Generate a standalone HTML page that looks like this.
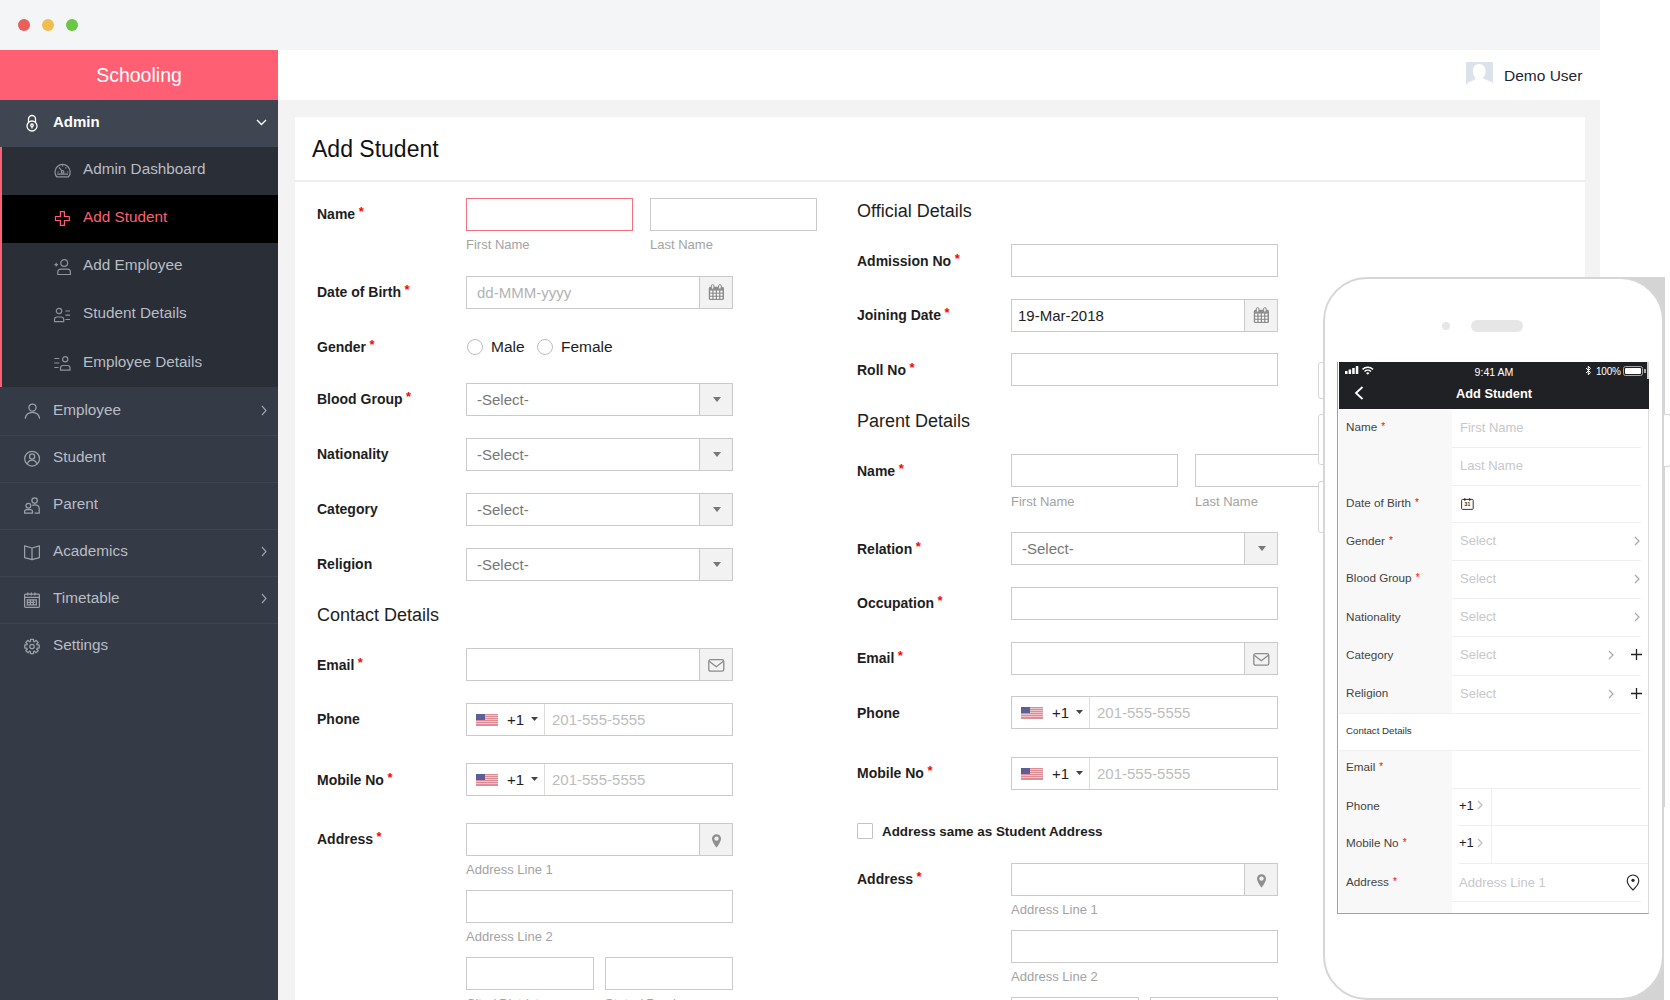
<!DOCTYPE html>
<html><head><meta charset="utf-8"><style>
*{box-sizing:border-box;margin:0;padding:0}
html,body{width:1670px;height:1000px;overflow:hidden;background:#fff;font-family:"Liberation Sans",sans-serif}
.a{position:absolute}
svg{position:absolute;overflow:visible}
.dot{position:absolute;width:12px;height:12px;border-radius:50%;top:19px}
.lbl{position:absolute;font:bold 14px/16px "Liberation Sans",sans-serif;color:#1e1e1e;white-space:nowrap}
.lbl i{font-style:normal;color:#f00;font-size:13px;position:relative;top:-3px;margin-left:3.5px}
.inp{position:absolute;height:33px;border:1px solid #cacaca;background:#fff}
.add{position:absolute;top:0;right:0;width:33px;height:31px;background:#f2f2f2;border-left:1px solid #cacaca}
.hlp{position:absolute;font:13px/15px "Liberation Sans",sans-serif;color:#a3a3a3;white-space:nowrap}
.ph{position:absolute;font:15px/17px "Liberation Sans",sans-serif;color:#777;white-space:nowrap}
.h2{position:absolute;font:18px/20px "Liberation Sans",sans-serif;color:#1e1e1e;white-space:nowrap}
.mi{position:absolute;font:15px/17px "Liberation Sans",sans-serif;color:#b9bdc5;white-space:nowrap}
.sep{position:absolute;left:0;width:278px;height:1px;background:#3d4350}
.pl{position:absolute;font:11.7px/14px "Liberation Sans",sans-serif;color:#444;white-space:nowrap}
.pl i{font-style:normal;color:#f00;margin-left:4px;font-size:10px;position:relative;top:-1px}
.pp{position:absolute;font:13px/15px "Liberation Sans",sans-serif;color:#c6c6cb;white-space:nowrap}
.pline{position:absolute;height:1px;background:#efefef}
</style></head><body>
<div class="a" style="left:0px;top:0px;width:1600px;height:50px;background:#f4f5f7;"></div>
<div class="dot" style="left:18px;background:#ea5f59"></div>
<div class="dot" style="left:42px;background:#f2bd4d"></div>
<div class="dot" style="left:66px;background:#6ac645"></div>
<div class="a" style="left:0px;top:50px;width:278px;height:50px;background:#fe5f73;"></div>
<div class="a" style="left:0;top:50px;width:278px;height:50px;color:#fff;font:19.5px/50px 'Liberation Sans',sans-serif;text-align:center">Schooling</div>
<div class="a" style="left:278px;top:50px;width:1322px;height:50px;background:#fff;"></div>
<svg style="left:1466px;top:62px" width="27" height="24" viewBox="0 0 27 24"><rect width="27" height="24" fill="#dde1ea"/><path d="M13.2 2C17 2 19.600 5 19.600 9C19.600 12 18.500 14.300 16.900 15.800C17.500 17 21 18 24.500 19.500C26 20.200 27 21 27 22V24H0V23C1 21.500 3 20 6 19C8 18.200 9.500 17.500 9.600 15.800C7.900 14.300 6.800 12 6.800 9C6.800 5 9.400 2 13.200 2Z" fill="#fff"/></svg>
<div class="mi" style="left:1504px;top:67px;color:#1f2533;font-size:15.5px;line-height:18px">Demo User</div>
<div class="a" style="left:0px;top:100px;width:278px;height:900px;background:#343a46;"></div>
<div class="a" style="left:278px;top:100px;width:1322px;height:900px;background:#f3f3f3;"></div>
<div class="a" style="left:295px;top:117px;width:1290px;height:883px;background:#fff;"></div>
<div class="a" style="left:295px;top:180px;width:1290px;height:2px;background:#eeeeee;"></div>
<div class="a" style="left:0px;top:100px;width:278px;height:47px;background:#3f4652;"></div>
<div class="a" style="left:53px;top:113px;font:bold 15px/18px 'Liberation Sans',sans-serif;color:#fff">Admin</div>
<svg style="left:25px;top:114px" width="14" height="18" viewBox="0 0 14 18" fill="none" stroke="#fff" stroke-width="1.3"><path d="M3.5 8V5a3.5 3.5 0 0 1 7 0v3"/><circle cx="7" cy="12" r="5"/><circle cx="7" cy="11.3" r="1.3"/><path d="M7 12.6v2"/></svg>
<svg style="left:256px;top:119px" width="11" height="7" viewBox="0 0 11 7" fill="none" stroke="#fff" stroke-width="1.4"><path d="M1 1l4.5 4.5L10 1"/></svg>
<div class="a" style="left:0px;top:147px;width:278px;height:240px;background:#2a2e37;"></div>
<div class="a" style="left:0px;top:195px;width:278px;height:48px;background:#000;"></div>
<div class="a" style="left:0px;top:147px;width:2px;height:240px;background:#fe5f73;"></div>
<svg style="left:54px;top:161px" width="17" height="17" viewBox="0 0 17 17" fill="none" stroke="#8f949c" stroke-width="1.2"><path d="M2.7 15.8A7.6 7.6 0 1 1 14.5 15.8Z"/><path d="M3.2 13.2H14M5.6 7.2l2.4 2.9M8.6 4.2v1.3M3.4 11h1.3M12.9 11h1.3M12.3 6.5l-.9.9M4.9 6.5l.9.9"/><circle cx="8.6" cy="10.9" r="1.3"/></svg>
<div class="mi" style="left:83px;top:160px;color:#b9bdc5;font-size:15.3px">Admin Dashboard</div>
<svg style="left:54px;top:209px" width="17" height="17" viewBox="0 0 17 17" fill="none" stroke="#fe5f73" stroke-width="1.2"><path stroke-linejoin="round" d="M6.4 2.6h4v4.9h4.9v4h-4.9v4.9h-4v-4.9H1.5v-4h4.9z"/></svg>
<div class="mi" style="left:83px;top:208px;color:#fe5f73;font-size:15.3px">Add Student</div>
<svg style="left:54px;top:257px" width="17" height="17" viewBox="0 0 17 17" fill="none" stroke="#8f949c" stroke-width="1.2"><circle cx="10.2" cy="6" r="3.4"/><path d="M3.8 17.5v-2.4c0-1.8 1.3-3 3-3h6.6c1.7 0 3 1.2 3 3v2.4z"/><path d="M0.4 7.6h3.6M2.2 5.8v3.6"/></svg>
<div class="mi" style="left:83px;top:256px;color:#b9bdc5;font-size:15.3px">Add Employee</div>
<svg style="left:54px;top:305px" width="17" height="17" viewBox="0 0 17 17" fill="none" stroke="#8f949c" stroke-width="1.2"><circle cx="5" cy="6" r="2.7"/><path d="M0.5 16.6v-2.1c0-1.5 1-2.5 2.5-2.5h4.2c1.5 0 2.5 1 2.5 2.5v2.1z"/><path d="M11.4 6h4.6M11.4 10.2h4.6M11.4 14.5h4.6"/></svg>
<div class="mi" style="left:83px;top:304px;color:#b9bdc5;font-size:15.3px">Student Details</div>
<svg style="left:54px;top:354px" width="17" height="17" viewBox="0 0 17 17" fill="none" stroke="#8f949c" stroke-width="1.2"><circle cx="11.2" cy="5.2" r="2.6"/><path d="M6.5 16.2v-2.2c0-1.5 1-2.5 2.5-2.5h4.5c1.5 0 2.5 1 2.5 2.5v2.2z"/><path d="M0.3 4.5h5M0.3 9h5M0.3 13.5h4.2"/></svg>
<div class="mi" style="left:83px;top:353px;color:#b9bdc5;font-size:15.3px">Employee Details</div>
<svg style="left:24px;top:402px" width="17" height="17" viewBox="0 0 17 17" fill="none" stroke="#9ca1a9" stroke-width="1.25"><circle cx="8.5" cy="5.6" r="3.6"/><path d="M1.3 16.8C1.3 12.8 4.5 10.3 8.4 10.3S15.5 12.8 15.5 16.8"/></svg>
<div class="mi" style="left:53px;top:401px;font-size:15.3px">Employee</div>
<svg style="left:261px;top:405px" width="6" height="11" viewBox="0 0 6 11" fill="none" stroke="#9ca1a9" stroke-width="1.2"><path d="M1 1l4 4.5L1 10"/></svg>
<div class="sep" style="top:435px"></div>
<svg style="left:24px;top:449px" width="17" height="17" viewBox="0 0 17 17" fill="none" stroke="#9ca1a9" stroke-width="1.25"><circle cx="8.1" cy="9.7" r="7.4"/><circle cx="8.1" cy="7.4" r="2.6"/><path d="M3.1 15.2C4.1 12.6 6 11.2 8.1 11.2S12.1 12.6 13.1 15.2"/></svg>
<div class="mi" style="left:53px;top:448px;font-size:15.3px">Student</div>
<div class="sep" style="top:482px"></div>
<svg style="left:24px;top:496px" width="17" height="17" viewBox="0 0 17 17" fill="none" stroke="#9ca1a9" stroke-width="1.25"><circle cx="10.6" cy="4.6" r="2.7"/><circle cx="4.4" cy="9.7" r="2.4"/><path d="M0.6 17.2v-1.4c0-1.3.8-2.1 2.1-2.1h3.7c1.3 0 2.1.8 2.1 2.1v1.4z"/><path d="M8.2 9.6c.6-.5 1.4-.8 2.4-.8 2.8 0 4.6 1.6 4.6 3.8v4.6h-4.6"/></svg>
<div class="mi" style="left:53px;top:495px;font-size:15.3px">Parent</div>
<div class="sep" style="top:529px"></div>
<svg style="left:24px;top:543px" width="17" height="17" viewBox="0 0 17 17" fill="none" stroke="#9ca1a9" stroke-width="1.25"><path stroke-linejoin="round" d="M0.6 2.9L8 5L15.4 2.9V14.6L8 16.7L0.6 14.6Z M8 5V16.7"/></svg>
<div class="mi" style="left:53px;top:542px;font-size:15.3px">Academics</div>
<svg style="left:261px;top:546px" width="6" height="11" viewBox="0 0 6 11" fill="none" stroke="#9ca1a9" stroke-width="1.2"><path d="M1 1l4 4.5L1 10"/></svg>
<div class="sep" style="top:576px"></div>
<svg style="left:24px;top:590px" width="17" height="17" viewBox="0 0 17 17" fill="none" stroke="#9ca1a9" stroke-width="1.25"><rect x="0.6" y="4" width="14.8" height="13.3" rx="1"/><path d="M0.6 7.3h14.8M3.8 2.4v3M7.3 2.4v3M10.9 2.4v3M3.3 9.8h9v5h-9zM3.3 12.3h7.5M6.3 9.8v5M9.3 9.8v5"/></svg>
<div class="mi" style="left:53px;top:589px;font-size:15.3px">Timetable</div>
<svg style="left:261px;top:593px" width="6" height="11" viewBox="0 0 6 11" fill="none" stroke="#9ca1a9" stroke-width="1.2"><path d="M1 1l4 4.5L1 10"/></svg>
<div class="sep" style="top:623px"></div>
<svg style="left:24px;top:638px" width="17" height="17" viewBox="0 0 17 17" fill="none" stroke="#9ca1a9" stroke-width="1.25"><path stroke-linejoin="round" d="M12.90 6.47 L13.07 6.95 L15.24 6.96 L15.24 10.04 L13.07 10.05 L12.90 10.53 L12.68 10.99 L14.21 12.53 L12.03 14.71 L10.49 13.18 L10.03 13.40 L9.55 13.57 L9.54 15.74 L6.46 15.74 L6.45 13.57 L5.97 13.40 L5.51 13.18 L3.97 14.71 L1.79 12.53 L3.32 10.99 L3.10 10.53 L2.93 10.05 L0.76 10.04 L0.76 6.96 L2.93 6.95 L3.10 6.47 L3.32 6.01 L1.79 4.47 L3.97 2.29 L5.51 3.82 L5.97 3.60 L6.45 3.43 L6.46 1.26 L9.54 1.26 L9.55 3.43 L10.03 3.60 L10.49 3.82 L12.03 2.29 L14.21 4.47 L12.68 6.01Z"/><circle cx="8" cy="8.5" r="2.2"/></svg>
<div class="mi" style="left:53px;top:636px;font-size:15.3px">Settings</div>
<div class="a" style="left:312px;top:136px;font:23px/26px 'Liberation Sans',sans-serif;color:#111;white-space:nowrap">Add Student</div>
<div class="lbl" style="left:317px;top:206px">Name<i>*</i></div>
<div class="inp" style="left:466px;top:198px;width:167px;height:33px;border-color:#f2727f"></div>
<div class="inp" style="left:650px;top:198px;width:167px;height:33px;border-color:#cacaca"></div>
<div class="hlp" style="left:466px;top:237px;">First Name</div>
<div class="hlp" style="left:650px;top:237px;">Last Name</div>
<div class="lbl" style="left:317px;top:284px">Date of Birth<i>*</i></div>
<div class="inp" style="left:466px;top:276px;width:267px">
<div class="ph" style="left:10px;top:7px;color:#b3b3b3">dd-MMM-yyyy</div>
<div class="add"><svg style="left:8px;top:7px" width="17" height="17" viewBox="0 0 17 17"><rect x="0.8" y="2.8" width="15.2" height="13.2" rx="1.6" fill="#8c8c8c"/><rect x="2.2" y="6.6" width="2.1" height="2" fill="#fff"/><rect x="2.2" y="9.7" width="2.1" height="2" fill="#fff"/><rect x="2.2" y="12.8" width="2.1" height="2" fill="#fff"/><rect x="5.6" y="6.6" width="2.1" height="2" fill="#fff"/><rect x="5.6" y="9.7" width="2.1" height="2" fill="#fff"/><rect x="5.6" y="12.8" width="2.1" height="2" fill="#fff"/><rect x="9.0" y="6.6" width="2.1" height="2" fill="#fff"/><rect x="9.0" y="9.7" width="2.1" height="2" fill="#fff"/><rect x="9.0" y="12.8" width="2.1" height="2" fill="#fff"/><rect x="12.4" y="6.6" width="2.1" height="2" fill="#fff"/><rect x="12.4" y="9.7" width="2.1" height="2" fill="#fff"/><rect x="12.4" y="12.8" width="2.1" height="2" fill="#fff"/><rect x="3.3" y="0.6" width="2.6" height="4.6" rx="1.3" fill="#f2f2f2" stroke="#8c8c8c" stroke-width="1"/><rect x="10.6" y="0.6" width="2.6" height="4.6" rx="1.3" fill="#f2f2f2" stroke="#8c8c8c" stroke-width="1"/></svg></div></div>
<div class="lbl" style="left:317px;top:339px">Gender<i>*</i></div>
<div class="a" style="left:467px;top:339px;width:16px;height:16px;border:1px solid #bdbdbd;border-radius:50%"></div>
<div class="ph" style="left:491px;top:338px;color:#1e1e1e;font-size:15.5px">Male</div>
<div class="a" style="left:537px;top:339px;width:16px;height:16px;border:1px solid #bdbdbd;border-radius:50%"></div>
<div class="ph" style="left:561px;top:338px;color:#1e1e1e;font-size:15.5px">Female</div>
<div class="lbl" style="left:317px;top:391px">Blood Group<i>*</i></div>
<div class="inp" style="left:466px;top:383px;width:267px">
<div class="ph" style="left:10px;top:7px;color:#777">-Select-</div>
<div class="add"><svg style="left:13px;top:13px" width="8" height="5" viewBox="0 0 8 5"><path d="M0 0h8L4 5z" fill="#777"/></svg></div></div>
<div class="lbl" style="left:317px;top:446px">Nationality</div>
<div class="inp" style="left:466px;top:438px;width:267px">
<div class="ph" style="left:10px;top:7px;color:#777">-Select-</div>
<div class="add"><svg style="left:13px;top:13px" width="8" height="5" viewBox="0 0 8 5"><path d="M0 0h8L4 5z" fill="#777"/></svg></div></div>
<div class="lbl" style="left:317px;top:501px">Category</div>
<div class="inp" style="left:466px;top:493px;width:267px">
<div class="ph" style="left:10px;top:7px;color:#777">-Select-</div>
<div class="add"><svg style="left:13px;top:13px" width="8" height="5" viewBox="0 0 8 5"><path d="M0 0h8L4 5z" fill="#777"/></svg></div></div>
<div class="lbl" style="left:317px;top:556px">Religion</div>
<div class="inp" style="left:466px;top:548px;width:267px">
<div class="ph" style="left:10px;top:7px;color:#777">-Select-</div>
<div class="add"><svg style="left:13px;top:13px" width="8" height="5" viewBox="0 0 8 5"><path d="M0 0h8L4 5z" fill="#777"/></svg></div></div>
<div class="h2" style="left:317px;top:605px;">Contact Details</div>
<div class="lbl" style="left:317px;top:657px">Email<i>*</i></div>
<div class="inp" style="left:466px;top:648px;width:267px">
<div class="add"><svg style="left:8px;top:10px" width="17" height="14" viewBox="0 0 17 14" fill="none" stroke="#8c8c8c" stroke-width="1.3" stroke-linejoin="round"><rect x="0.8" y="0.6" width="15" height="11.6" rx="1.8"/><path d="M1.2 2.2l7.1 5.6 7.1-5.6"/></svg></div></div>
<div class="lbl" style="left:317px;top:711px">Phone</div>
<div class="inp" style="left:466px;top:703px;width:267px">
<svg style="left:9px;top:10px" width="22" height="12" viewBox="0 0 22 12" shape-rendering="crispEdges"><rect width="22" height="12" fill="#de8d97"/><rect y="1" width="22" height="1" fill="#ecc3c8"/><rect y="3" width="22" height="1" fill="#ecc3c8"/><rect y="5" width="22" height="1" fill="#ecc3c8"/><rect y="7" width="22" height="1" fill="#ecc3c8"/><rect y="9" width="22" height="1" fill="#ecc3c8"/><rect width="9" height="6" fill="#5b5f96"/></svg>
<div class="ph" style="left:40px;top:7px;color:#222">+1</div>
<svg style="left:64px;top:13px" width="7" height="4" viewBox="0 0 7 4"><path d="M0 0h7L3.5 4z" fill="#444"/></svg>
<div class="a" style="left:77px;top:0;width:1px;height:31px;background:#dcdcdc"></div>
<div class="ph" style="left:85px;top:7px;color:#bdbdbd">201-555-5555</div>
</div>
<div class="lbl" style="left:317px;top:772px">Mobile No<i>*</i></div>
<div class="inp" style="left:466px;top:763px;width:267px">
<svg style="left:9px;top:10px" width="22" height="12" viewBox="0 0 22 12" shape-rendering="crispEdges"><rect width="22" height="12" fill="#de8d97"/><rect y="1" width="22" height="1" fill="#ecc3c8"/><rect y="3" width="22" height="1" fill="#ecc3c8"/><rect y="5" width="22" height="1" fill="#ecc3c8"/><rect y="7" width="22" height="1" fill="#ecc3c8"/><rect y="9" width="22" height="1" fill="#ecc3c8"/><rect width="9" height="6" fill="#5b5f96"/></svg>
<div class="ph" style="left:40px;top:7px;color:#222">+1</div>
<svg style="left:64px;top:13px" width="7" height="4" viewBox="0 0 7 4"><path d="M0 0h7L3.5 4z" fill="#444"/></svg>
<div class="a" style="left:77px;top:0;width:1px;height:31px;background:#dcdcdc"></div>
<div class="ph" style="left:85px;top:7px;color:#bdbdbd">201-555-5555</div>
</div>
<div class="lbl" style="left:317px;top:831px">Address<i>*</i></div>
<div class="inp" style="left:466px;top:823px;width:267px">
<div class="add"><svg style="left:11px;top:10px" width="11" height="14" viewBox="0 0 11 14"><path d="M5.5 0.3C8.200 .3 10 2.300 10 4.700 10 6.800 7.300 11.500 5.500 13.600 3.700 11.500 1 6.800 1 4.700 1 2.300 2.800 .3 5.500 .3z" fill="#8f8f8f"/><circle cx="5.5" cy="4.6" r="2.2" fill="#f2f2f2"/></svg></div></div>
<div class="hlp" style="left:466px;top:862px;">Address Line 1</div>
<div class="inp" style="left:466px;top:890px;width:267px;height:33px;border-color:#cacaca"></div>
<div class="hlp" style="left:466px;top:929px;">Address Line 2</div>
<div class="inp" style="left:466px;top:957px;width:128px;height:33px;border-color:#cacaca"></div>
<div class="inp" style="left:605px;top:957px;width:128px;height:33px;border-color:#cacaca"></div>
<div class="hlp" style="left:466px;top:996px;">City / District</div>
<div class="hlp" style="left:605px;top:996px;">State / Province</div>
<div class="h2" style="left:857px;top:201px;">Official Details</div>
<div class="lbl" style="left:857px;top:253px">Admission No<i>*</i></div>
<div class="inp" style="left:1011px;top:244px;width:267px;height:33px;border-color:#cacaca"></div>
<div class="lbl" style="left:857px;top:307px">Joining Date<i>*</i></div>
<div class="inp" style="left:1011px;top:299px;width:267px">
<div class="ph" style="left:6px;top:7px;color:#222">19-Mar-2018</div>
<div class="add"><svg style="left:8px;top:7px" width="17" height="17" viewBox="0 0 17 17"><rect x="0.8" y="2.8" width="15.2" height="13.2" rx="1.6" fill="#8c8c8c"/><rect x="2.2" y="6.6" width="2.1" height="2" fill="#fff"/><rect x="2.2" y="9.7" width="2.1" height="2" fill="#fff"/><rect x="2.2" y="12.8" width="2.1" height="2" fill="#fff"/><rect x="5.6" y="6.6" width="2.1" height="2" fill="#fff"/><rect x="5.6" y="9.7" width="2.1" height="2" fill="#fff"/><rect x="5.6" y="12.8" width="2.1" height="2" fill="#fff"/><rect x="9.0" y="6.6" width="2.1" height="2" fill="#fff"/><rect x="9.0" y="9.7" width="2.1" height="2" fill="#fff"/><rect x="9.0" y="12.8" width="2.1" height="2" fill="#fff"/><rect x="12.4" y="6.6" width="2.1" height="2" fill="#fff"/><rect x="12.4" y="9.7" width="2.1" height="2" fill="#fff"/><rect x="12.4" y="12.8" width="2.1" height="2" fill="#fff"/><rect x="3.3" y="0.6" width="2.6" height="4.6" rx="1.3" fill="#f2f2f2" stroke="#8c8c8c" stroke-width="1"/><rect x="10.6" y="0.6" width="2.6" height="4.6" rx="1.3" fill="#f2f2f2" stroke="#8c8c8c" stroke-width="1"/></svg></div></div>
<div class="lbl" style="left:857px;top:362px">Roll No<i>*</i></div>
<div class="inp" style="left:1011px;top:353px;width:267px;height:33px;border-color:#cacaca"></div>
<div class="h2" style="left:857px;top:411px;">Parent Details</div>
<div class="lbl" style="left:857px;top:463px">Name<i>*</i></div>
<div class="inp" style="left:1011px;top:454px;width:167px;height:33px;border-color:#cacaca"></div>
<div class="inp" style="left:1195px;top:454px;width:167px;height:33px;border-color:#cacaca"></div>
<div class="hlp" style="left:1011px;top:494px;">First Name</div>
<div class="hlp" style="left:1195px;top:494px;">Last Name</div>
<div class="lbl" style="left:857px;top:541px">Relation<i>*</i></div>
<div class="inp" style="left:1011px;top:532px;width:267px">
<div class="ph" style="left:10px;top:7px;color:#777">-Select-</div>
<div class="add"><svg style="left:13px;top:13px" width="8" height="5" viewBox="0 0 8 5"><path d="M0 0h8L4 5z" fill="#777"/></svg></div></div>
<div class="lbl" style="left:857px;top:595px">Occupation<i>*</i></div>
<div class="inp" style="left:1011px;top:587px;width:267px;height:33px;border-color:#cacaca"></div>
<div class="lbl" style="left:857px;top:650px">Email<i>*</i></div>
<div class="inp" style="left:1011px;top:642px;width:267px">
<div class="add"><svg style="left:8px;top:10px" width="17" height="14" viewBox="0 0 17 14" fill="none" stroke="#8c8c8c" stroke-width="1.3" stroke-linejoin="round"><rect x="0.8" y="0.6" width="15" height="11.6" rx="1.8"/><path d="M1.2 2.2l7.1 5.6 7.1-5.6"/></svg></div></div>
<div class="lbl" style="left:857px;top:705px">Phone</div>
<div class="inp" style="left:1011px;top:696px;width:267px">
<svg style="left:9px;top:10px" width="22" height="12" viewBox="0 0 22 12" shape-rendering="crispEdges"><rect width="22" height="12" fill="#de8d97"/><rect y="1" width="22" height="1" fill="#ecc3c8"/><rect y="3" width="22" height="1" fill="#ecc3c8"/><rect y="5" width="22" height="1" fill="#ecc3c8"/><rect y="7" width="22" height="1" fill="#ecc3c8"/><rect y="9" width="22" height="1" fill="#ecc3c8"/><rect width="9" height="6" fill="#5b5f96"/></svg>
<div class="ph" style="left:40px;top:7px;color:#222">+1</div>
<svg style="left:64px;top:13px" width="7" height="4" viewBox="0 0 7 4"><path d="M0 0h7L3.5 4z" fill="#444"/></svg>
<div class="a" style="left:77px;top:0;width:1px;height:31px;background:#dcdcdc"></div>
<div class="ph" style="left:85px;top:7px;color:#bdbdbd">201-555-5555</div>
</div>
<div class="lbl" style="left:857px;top:765px">Mobile No<i>*</i></div>
<div class="inp" style="left:1011px;top:757px;width:267px">
<svg style="left:9px;top:10px" width="22" height="12" viewBox="0 0 22 12" shape-rendering="crispEdges"><rect width="22" height="12" fill="#de8d97"/><rect y="1" width="22" height="1" fill="#ecc3c8"/><rect y="3" width="22" height="1" fill="#ecc3c8"/><rect y="5" width="22" height="1" fill="#ecc3c8"/><rect y="7" width="22" height="1" fill="#ecc3c8"/><rect y="9" width="22" height="1" fill="#ecc3c8"/><rect width="9" height="6" fill="#5b5f96"/></svg>
<div class="ph" style="left:40px;top:7px;color:#222">+1</div>
<svg style="left:64px;top:13px" width="7" height="4" viewBox="0 0 7 4"><path d="M0 0h7L3.5 4z" fill="#444"/></svg>
<div class="a" style="left:77px;top:0;width:1px;height:31px;background:#dcdcdc"></div>
<div class="ph" style="left:85px;top:7px;color:#bdbdbd">201-555-5555</div>
</div>
<div class="a" style="left:857px;top:823px;width:16px;height:16px;border:1px solid #c4c4c4;border-radius:1px"></div>
<div class="lbl" style="left:882px;top:824px;font-size:13.4px">Address same as Student Address</div>
<div class="lbl" style="left:857px;top:871px">Address<i>*</i></div>
<div class="inp" style="left:1011px;top:863px;width:267px">
<div class="add"><svg style="left:11px;top:10px" width="11" height="14" viewBox="0 0 11 14"><path d="M5.5 0.3C8.200 .3 10 2.300 10 4.700 10 6.800 7.300 11.500 5.500 13.600 3.700 11.500 1 6.800 1 4.700 1 2.300 2.800 .3 5.500 .3z" fill="#8f8f8f"/><circle cx="5.5" cy="4.6" r="2.2" fill="#f2f2f2"/></svg></div></div>
<div class="hlp" style="left:1011px;top:902px;">Address Line 1</div>
<div class="inp" style="left:1011px;top:930px;width:267px;height:33px;border-color:#cacaca"></div>
<div class="hlp" style="left:1011px;top:969px;">Address Line 2</div>
<div class="inp" style="left:1011px;top:997px;width:128px;height:33px;border-color:#cacaca"></div>
<div class="inp" style="left:1150px;top:997px;width:128px;height:33px;border-color:#cacaca"></div>
<div class="a" style="left:1598px;top:277px;width:67px;height:530px;background:#d4d4d4;"></div>
<div class="a" style="left:1598px;top:807px;width:66px;height:193px;background:#d4d4d4;"></div>
<div class="a" style="left:1318px;top:362px;width:8px;height:37px;border:1.5px solid #d6d6d6;border-radius:3px;background:#fff"></div>
<div class="a" style="left:1318px;top:414px;width:8px;height:51px;border:1.5px solid #d6d6d6;border-radius:3px;background:#fff"></div>
<div class="a" style="left:1318px;top:481px;width:8px;height:52px;border:1.5px solid #d6d6d6;border-radius:3px;background:#fff"></div>
<div class="a" style="left:1662px;top:414px;width:9px;height:53px;border:1.5px solid #d6d6d6;border-radius:3px;background:#fff"></div>
<div class="a" style="left:1323px;top:277px;width:341px;height:723px;background:#fff;border:2px solid #d6d6d6;border-radius:44px"></div>
<div class="a" style="left:1442px;top:322px;width:8px;height:8px;border-radius:50%;background:#e6e6e6"></div>
<div class="a" style="left:1471px;top:320px;width:52px;height:12px;border-radius:6px;background:#e6e6e6"></div>
<div class="a" style="left:1337px;top:362px;width:312px;height:552px;background:#fff;border:1px solid #a0a0a0;border-right-color:#dcdcdc;border-top:none"></div>
<div class="a" style="left:1339px;top:362px;width:310px;height:47px;background:#202125;"></div>
<div class="a" style="left:1339px;top:410px;width:113px;height:303px;background:#f8f8f8;"></div>
<div class="a" style="left:1339px;top:750px;width:113px;height:151px;background:#f8f8f8;"></div>
<div class="a" style="left:1339px;top:901px;width:113px;height:12px;background:#f8f8f8;"></div>
<svg style="left:1345px;top:366px" width="30" height="9" viewBox="0 0 30 9" fill="#fff"><rect x="0" y="5" width="2.5" height="3"/><rect x="3.6" y="3.5" width="2.5" height="4.5"/><rect x="7.2" y="2" width="2.5" height="6"/><rect x="10.8" y="0" width="2.5" height="8"/><path d="M17 2.8a8.5 8.5 0 0 1 11.5 0l-1 1.1a7 7 0 0 0-9.5 0z M19 4.9a5.5 5.5 0 0 1 7.5 0l-1 1.1a4 4 0 0 0-5.5 0z M21 7a2.6 2.6 0 0 1 3.5 0l-1.75 1.8z"/></svg>
<div class="a" style="left:1339px;top:365px;width:310px;text-align:center;font:10.6px/14px 'Liberation Sans',sans-serif;color:#fff">9:41 AM</div>
<svg style="left:1585px;top:365px" width="7" height="11" viewBox="0 0 7 11" fill="none" stroke="#fff" stroke-width="1"><path d="M1 3l4.5 4.5L3.3 9.8V1.2L5.5 3.5 1 8"/></svg>
<div class="a" style="left:1596px;top:366px;font:10px/12px 'Liberation Sans',sans-serif;color:#fff;letter-spacing:-0.2px">100%</div>
<div class="a" style="left:1623px;top:366px;width:20px;height:10px;border:1px solid #aaa;border-radius:2.5px;padding:1px"><div style="width:100%;height:100%;background:#fff;border-radius:1px"></div></div>
<div class="a" style="left:1644px;top:369px;width:1.5px;height:4px;background:#aaa"></div>
<div class="a" style="left:1647px;top:362px;width:2px;height:17px;background:#cfcfcf"></div>
<svg style="left:1354px;top:386px" width="10" height="14" viewBox="0 0 10 14" fill="none" stroke="#fff" stroke-width="1.8"><path d="M8.5 1L2 7l6.5 6"/></svg>
<div class="a" style="left:1339px;top:386px;width:310px;text-align:center;font:bold 12.8px/15px 'Liberation Sans',sans-serif;color:#fff">Add Student</div>
<div class="pl" style="left:1346px;top:420px">Name<i>*</i></div>
<div class="pp" style="left:1460px;top:420px;color:#c7c7cc">First Name</div>
<div class="pline" style="left:1452px;top:447px;width:189px"></div>
<div class="pp" style="left:1460px;top:458px;color:#c7c7cc">Last Name</div>
<div class="pline" style="left:1452px;top:485px;width:189px"></div>
<div class="pl" style="left:1346px;top:496px">Date of Birth<i>*</i></div>
<svg style="left:1461px;top:498px" width="13" height="13" viewBox="0 0 13 13"><rect x="0.6" y="1.4" width="11.6" height="10" rx="1" fill="none" stroke="#333" stroke-width="1"/><rect x="3" y="0.3" width="1.6" height="2.4" rx=".8" fill="#222"/><rect x="7.8" y="0.3" width="1.6" height="2.4" rx=".8" fill="#222"/><text x="6.4" y="8.3" font-size="5" font-weight="bold" text-anchor="middle" font-family="Liberation Sans" fill="#222">31</text></svg>
<div class="pline" style="left:1452px;top:522px;width:189px"></div>
<div class="pl" style="left:1346px;top:534px">Gender<i>*</i></div>
<div class="pp" style="left:1460px;top:533px;color:#c7c7cc">Select</div>
<svg style="left:1634px;top:536px" width="6" height="10" viewBox="0 0 6 10" fill="none" stroke="#a8a8ad" stroke-width="1.2"><path d="M1 1l4 4-4 4"/></svg>
<div class="pline" style="left:1452px;top:560px;width:189px"></div>
<div class="pl" style="left:1346px;top:571px">Blood Group<i>*</i></div>
<div class="pp" style="left:1460px;top:571px;color:#c7c7cc">Select</div>
<svg style="left:1634px;top:574px" width="6" height="10" viewBox="0 0 6 10" fill="none" stroke="#a8a8ad" stroke-width="1.2"><path d="M1 1l4 4-4 4"/></svg>
<div class="pline" style="left:1452px;top:598px;width:189px"></div>
<div class="pl" style="left:1346px;top:610px">Nationality</div>
<div class="pp" style="left:1460px;top:609px;color:#c7c7cc">Select</div>
<svg style="left:1634px;top:612px" width="6" height="10" viewBox="0 0 6 10" fill="none" stroke="#a8a8ad" stroke-width="1.2"><path d="M1 1l4 4-4 4"/></svg>
<div class="pline" style="left:1452px;top:636px;width:189px"></div>
<div class="pl" style="left:1346px;top:648px">Category</div>
<div class="pp" style="left:1460px;top:647px;color:#c7c7cc">Select</div>
<svg style="left:1608px;top:650px" width="6" height="10" viewBox="0 0 6 10" fill="none" stroke="#a8a8ad" stroke-width="1.2"><path d="M1 1l4 4-4 4"/></svg>
<svg style="left:1631px;top:649px" width="11" height="11" viewBox="0 0 11 11" fill="none" stroke="#222" stroke-width="1.3"><path d="M5.5 0v11M0 5.5h11"/></svg>
<div class="pline" style="left:1452px;top:675px;width:189px"></div>
<div class="pl" style="left:1346px;top:686px">Religion</div>
<div class="pp" style="left:1460px;top:686px;color:#c7c7cc">Select</div>
<svg style="left:1608px;top:689px" width="6" height="10" viewBox="0 0 6 10" fill="none" stroke="#a8a8ad" stroke-width="1.2"><path d="M1 1l4 4-4 4"/></svg>
<svg style="left:1631px;top:688px" width="11" height="11" viewBox="0 0 11 11" fill="none" stroke="#222" stroke-width="1.3"><path d="M5.5 0v11M0 5.5h11"/></svg>
<div class="pline" style="left:1339px;top:713px;width:302px"></div>
<div class="a" style="left:1346px;top:725px;font:9.7px/11px 'Liberation Sans',sans-serif;color:#333">Contact Details</div>
<div class="pline" style="left:1339px;top:750px;width:302px"></div>
<div class="pl" style="left:1346px;top:760px">Email<i>*</i></div>
<div class="pline" style="left:1452px;top:788px;width:189px"></div>
<div class="pl" style="left:1346px;top:799px">Phone</div>
<div class="pp" style="left:1459px;top:798px;color:#222">+1</div>
<svg style="left:1477px;top:800px" width="6" height="10" viewBox="0 0 6 10" fill="none" stroke="#bbb" stroke-width="1.2"><path d="M1 1l4 4-4 4"/></svg>
<div class="pline" style="left:1459px;top:825px;width:189px"></div>
<div class="a" style="left:1491px;top:788px;width:1px;height:75px;background:#f0f0f0;"></div>
<div class="pl" style="left:1346px;top:836px">Mobile No<i>*</i></div>
<div class="pp" style="left:1459px;top:835px;color:#222">+1</div>
<svg style="left:1477px;top:838px" width="6" height="10" viewBox="0 0 6 10" fill="none" stroke="#bbb" stroke-width="1.2"><path d="M1 1l4 4-4 4"/></svg>
<div class="pline" style="left:1459px;top:863px;width:189px"></div>
<div class="pl" style="left:1346px;top:875px">Address<i>*</i></div>
<div class="pp" style="left:1459px;top:875px;color:#c7c7cc">Address Line 1</div>
<svg style="left:1626px;top:874px" width="14" height="17" viewBox="0 0 14 17" fill="none" stroke="#222" stroke-width="1.1"><path d="M7 1a5.8 5.8 0 0 1 5.8 5.8C12.8 10.5 7 16 7 16S1.2 10.5 1.2 6.8A5.8 5.8 0 0 1 7 1z"/><circle cx="7" cy="6.3" r="1.6" fill="#222" stroke="none"/></svg>
<div class="pline" style="left:1452px;top:901px;width:189px"></div>
</body></html>
